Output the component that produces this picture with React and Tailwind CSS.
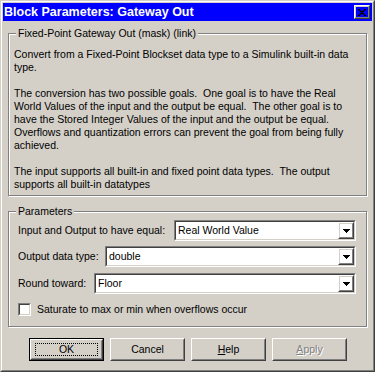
import React from 'react'

const font = { fontFamily: '"Liberation Sans", Arial, sans-serif' }

function Raised({ className = '', children }) {
  return (
    <div className={`border border-t-white border-l-white border-r-[#404040] border-b-[#404040] ${className}`}>
      <div className="w-full h-full border border-t-[#d4d0c8] border-l-[#d4d0c8] border-r-[#808080] border-b-[#808080] flex items-center justify-center">
        {children}
      </div>
    </div>
  )
}

function Sunken({ className = '', children }) {
  return (
    <div className={`border border-t-[#808080] border-l-[#808080] border-r-white border-b-white ${className}`}>
      <div className="w-full h-full border border-t-[#404040] border-l-[#404040] border-r-[#d4d0c8] border-b-[#d4d0c8] bg-white flex">
        {children}
      </div>
    </div>
  )
}

const Arrow = () => (
  <svg width="7" height="4" shapeRendering="crispEdges">
    <rect x="0" y="0" width="7" height="1" fill="#000" />
    <rect x="1" y="1" width="5" height="1" fill="#000" />
    <rect x="2" y="2" width="3" height="1" fill="#000" />
    <rect x="3" y="3" width="1" height="1" fill="#000" />
  </svg>
)

const CloseGlyph = () => {
  const rows = ['XX....XX', '.XX..XX.', '..XXXX..', '...XX...', '..XXXX..', '.XX..XX.', 'XX....XX']
  return (
    <svg width="8" height="7" shapeRendering="crispEdges">
      {rows.flatMap((r, y) => r.split('').map((c, x) => c === 'X' ? <rect key={`${x}-${y}`} x={x} y={y} width="1" height="1" fill="#000" /> : null))}
    </svg>
  )
}

function Combo({ value, className = '' }) {
  return (
    <Sunken className={`h-[21px] ${className}`}>
      <div className="flex-1 pl-[2px] flex items-center">{value}</div>
      <Raised className="w-[16px] h-full"><Arrow /></Raised>
    </Sunken>
  )
}

function Group({ label, className = '', children }) {
  return (
    <div className={`relative border border-[#808080] shadow-[inset_1px_1px_0_#fff,1px_1px_0_#fff] ${className}`}>
      <span className="absolute left-[7px] top-[-7px] bg-[#d4d0c8] px-[2px] leading-[13px] whitespace-nowrap">{label}</span>
      {children}
    </div>
  )
}

function Button({ children, isDefault, disabled }) {
  const inner = (
    <Raised className="w-full h-full">
      {isDefault ? (
        <div className="w-[63px] h-[13px] border border-dotted border-black flex items-center justify-center">{children}</div>
      ) : (
        <span className={disabled ? 'text-[#808080] [text-shadow:1px_1px_0_#fff]' : ''}>{children}</span>
      )}
    </Raised>
  )
  return isDefault ? (
    <div className="w-[75px] h-[23px] border border-black">{inner}</div>
  ) : (
    <div className="w-[75px] h-[23px]">{inner}</div>
  )
}

export default function App() {
  return (
    <div style={font} className="w-[375px] h-[372px] bg-[#d4d0c8] text-[10.5px] text-black border border-t-[#d4d0c8] border-l-[#d4d0c8] border-r-[#404040] border-b-[#404040]">
      <div className="w-full h-full border border-t-white border-l-white border-r-[#808080] border-b-[#808080] p-px flex flex-col">
        {/* title bar */}
        <div className="h-[18px] bg-[#0000ff] flex items-center justify-between pl-[1px] pr-[2px]">
          <span className="text-white font-bold text-[12.5px] leading-none whitespace-nowrap">Block Parameters: Gateway Out</span>
          <Raised className="w-[16px] h-[14px]"><CloseGlyph /></Raised>
        </div>

        <div className="px-[5px]">
          <Group label="Fixed-Point Gateway Out (mask) (link)" className="mt-[12px] pl-[5px] pt-[14px] pb-[4px]">
            <div className="leading-[13px] whitespace-nowrap">
              <p>Convert from a Fixed-Point Blockset data type to a Simulink built-in data<br />type.</p>
              <p className="mt-[13px]">
                The conversion has two possible goals.&nbsp; One goal is to have the Real<br />
                World Values of the input and the output be equal.&nbsp; The other goal is to<br />
                have the Stored Integer Values of the input and the output be equal.<br />
                Overflows and quantization errors can prevent the goal from being fully<br />
                achieved.
              </p>
              <p className="mt-[13px]">
                The input supports all built-in and fixed point data types.&nbsp; The output<br />
                supports all built-in datatypes
              </p>
            </div>
          </Group>

          <Group label="Parameters" className="mt-[15px] pl-[9px] pr-[10px] pt-[8px] pb-[10px]">
            <div className="flex items-center">
              <span className="w-[156px] shrink-0 whitespace-nowrap">Input and Output to have equal:</span>
              <Combo value="Real World Value" className="flex-1" />
            </div>
            <div className="flex items-center mt-[5px]">
              <span className="w-[87px] shrink-0 whitespace-nowrap">Output data type:</span>
              <Combo value="double" className="flex-1" />
            </div>
            <div className="flex items-center mt-[6px]">
              <span className="w-[76px] shrink-0 whitespace-nowrap">Round toward:</span>
              <Combo value="Floor" className="flex-1" />
            </div>
            <div className="flex items-center mt-[9px]">
              <Sunken className="w-[13px] h-[13px]" />
              <span className="ml-[6px] leading-[13px]">Saturate to max or min when overflows occur</span>
            </div>
          </Group>
        </div>

        <div className="flex gap-[6px] pl-[26px] mt-[11px]">
          <Button isDefault>OK</Button>
          <Button>Cancel</Button>
          <Button><span><u>H</u>elp</span></Button>
          <Button disabled><span><u>A</u>pply</span></Button>
        </div>
      </div>
    </div>
  )
}
